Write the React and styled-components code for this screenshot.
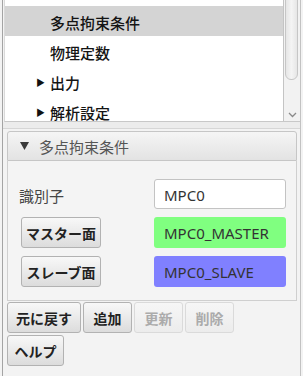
import React from 'react'
import styled, { createGlobalStyle } from 'styled-components'

const Global = createGlobalStyle`
  html, body {
    margin: 0;
    padding: 0;
    background: #f3f3f3;
  }
  body {
    font-family: "Noto Sans", "Noto Sans CJK JP", sans-serif;
  }
`

const Frame = styled.div`
  box-sizing: border-box;
  margin-left: 2px;
  width: 299px;
  height: 376px;
  border-left: 1px solid #a4a4a4;
  border-right: 1px solid #c2c2c2;
  background: #f3f3f3;
  overflow: hidden;
`

const TreeWrap = styled.div`
  display: flex;
  margin-left: 1px;
  height: 121px;
  border-left: 1px solid #dadada;
  border-bottom: 1px solid #c8c8c8;
  background: #fff;
  overflow: hidden;
`

const TreeList = styled.div`
  flex: 1;
  padding-top: 6px;
`

const Row = styled.div`
  display: flex;
  align-items: center;
  height: 30px;
  padding: 2px 0 0 31px;
  box-sizing: border-box;
  font-size: 15px;
  font-weight: 500;
  color: #141414;
  background: ${p => (p.$selected ? '#d4d4d4' : 'transparent')};
`

const Arrow = styled.span`
  width: 14px;
  font-size: 9px;
  color: #111;
`

const VScroll = styled.div`
  position: relative;
  box-sizing: border-box;
  width: 17px;
  border-left: 1px solid #c4c4c4;
  background: #f2f2f2;
`

const Thumb = styled.div`
  position: absolute;
  left: 1px;
  right: 2px;
  top: -10px;
  height: 90px;
  box-sizing: border-box;
  border: 1px solid #c6c6c6;
  border-radius: 6px;
  background: linear-gradient(to right, #e6e6e6, #f4f4f4 50%, #e6e6e6);
`

const ScrollArrow = styled.svg`
  position: absolute;
  left: 4px;
  bottom: 3px;
`

const Divider = styled.div`
  height: 6px;
  background: #ececec;
  border-bottom: 1px solid #d6d6d6;
`

const Pane = styled.div`
  margin: 2px 3px 0 4px;
`

const PaneHeader = styled.div`
  box-sizing: border-box;
  display: flex;
  align-items: center;
  height: 30px;
  padding-left: 12px;
  border: 1px solid #c6c6c6;
  border-radius: 3px 3px 0 0;
  background: linear-gradient(#f5f5f5, #e3e3e3);
  font-size: 15px;
  color: #555;
`

const HeaderArrow = styled.svg`
  margin-right: 10px;
`

const PaneBody = styled.div`
  box-sizing: border-box;
  height: 140px;
  padding: 18px 10px 0 11px;
  border: 1px solid #cfcfcf;
  border-top: none;
  background: #f4f4f4;
  display: grid;
  grid-template-columns: 1fr 132px;
  grid-template-rows: 30px 31px 31px;
  row-gap: 8px;
  align-items: center;
`

const Label = styled.span`
  font-size: 15px;
  color: #454545;
  padding-top: 3px;
`

const Field = styled.div`
  box-sizing: border-box;
  height: ${p => p.$h || 30}px;
  display: flex;
  align-items: center;
  padding: 1px 0 0 9px;
  border: 1px solid ${p => (p.$bg ? 'transparent' : '#c3c3c3')};
  border-radius: 3px;
  background: ${p => p.$bg || '#fff'};
  font-size: 15px;
  color: #333;
`

const Button = styled.button`
  box-sizing: border-box;
  height: 31px;
  width: ${p => p.$w}px;
  padding: 1px 0 0;
  margin: 0;
  border: 1px solid ${p => (p.disabled ? '#dadada' : '#b2b2b2')};
  border-radius: 3px;
  background: ${p =>
    p.disabled ? 'linear-gradient(#f6f6f6, #ececec)' : 'linear-gradient(#f8f8f8, #dcdcdc)'};
  font-family: "Noto Sans", "Noto Sans CJK JP", sans-serif;
  font-size: 14px;
  font-weight: 700;
  color: ${p => (p.disabled ? '#ababab' : '#222')};
  justify-self: start;
  margin-left: ${p => p.$ml || 0}px;
`

const ButtonBar = styled.div`
  display: flex;
  flex-wrap: wrap;
  gap: 2px 2px;
  padding: 1px 0 0 4px;
  width: 240px;
`

const tree = [
  { name: '多点拘束条件', selected: true },
  { name: '物理定数' },
  { name: '出力', folder: true },
  { name: '解析設定', folder: true },
]

export default function App() {
  return (
    <>
      <Global />
      <Frame>
        <TreeWrap>
          <TreeList>
            {tree.map(t => (
              <Row key={t.name} $selected={t.selected}>
                <Arrow>{t.folder ? '▶' : ''}</Arrow>
                {t.name}
              </Row>
            ))}
          </TreeList>
          <VScroll>
            <Thumb />
            <ScrollArrow width="9" height="6" viewBox="0 0 9 6">
              <path d="M1 1 L4.5 4.5 L8 1" fill="none" stroke="#8a8a8a" strokeWidth="1.3" />
            </ScrollArrow>
          </VScroll>
        </TreeWrap>
        <Divider />
        <Pane>
          <PaneHeader>
            <HeaderArrow width="9" height="8" viewBox="0 0 9 8">
              <path d="M0 0 L9 0 L4.5 8 Z" fill="#3a3a3a" />
            </HeaderArrow>
            多点拘束条件
          </PaneHeader>
          <PaneBody>
            <Label>識別子</Label>
            <Field>MPC0</Field>
            <Button $w={80} $ml={2}>マスター面</Button>
            <Field $bg="#80ff80" $h={31}>MPC0_MASTER</Field>
            <Button $w={80} $ml={2}>スレーブ面</Button>
            <Field $bg="#8080ff" $h={31}>MPC0_SLAVE</Field>
          </PaneBody>
        </Pane>
        <ButtonBar>
          <Button $w={74}>元に戻す</Button>
          <Button $w={49}>追加</Button>
          <Button $w={49} disabled>更新</Button>
          <Button $w={49} disabled>削除</Button>
          <Button $w={57}>ヘルプ</Button>
        </ButtonBar>
      </Frame>
    </>
  )
}
